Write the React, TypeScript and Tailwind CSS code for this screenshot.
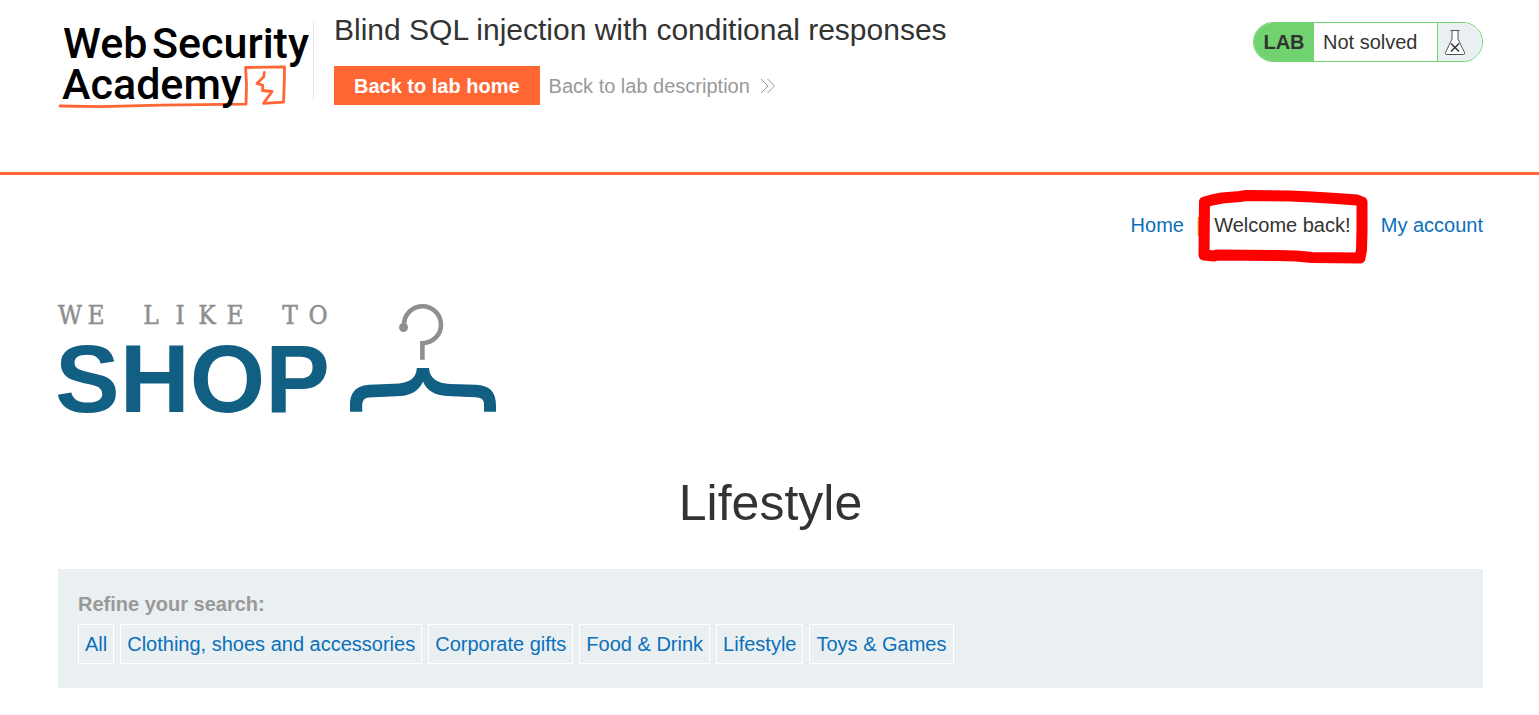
const categories = [
  'All',
  'Clothing, shoes and accessories',
  'Corporate gifts',
  'Food & Drink',
  'Lifestyle',
  'Toys & Games',
];

function AcademyLogo() {
  return (
    <svg className="overflow-visible" width="250" height="90" viewBox="58 20 250 90" role="img" aria-label="Web Security Academy">
      <g fill="none" stroke="#ff6633" strokeLinejoin="round" strokeLinecap="round">
        <path d="M60 106 L100 106.600 L160 105.200 L246 104.200 L246.500 85 L245.600 67.500 L284.500 66.800 L284.300 82 L283.500 102.200 L263.500 103.300 L272 91.500 L262.500 90.500 L262.800 85.300 L257 83.500 L263.700 76.700 L264.300 72.500" strokeWidth="2.800" />
      </g>
      <g fill="#000" fontFamily="Roboto, sans-serif" fontSize="43" fontWeight="500">
        <text x="63" y="58">Web</text>
        <text x="152" y="58">Security</text>
        <text x="62" y="99">Academy</text>
      </g>
    </svg>
  );
}

function FlaskIcon() {
  return (
    <svg width="22" height="28" viewBox="0 0 22 28" fill="none" aria-hidden="true">
      <path d="M8 2.500V11L1.500 24.500q-.5 2 1 2h17q1.500 0 1-2L14 11V2.500z" fill="#fff" stroke="#555" strokeWidth="1" />
      <path d="M6.500 2.500h9" stroke="#555" strokeWidth="1.200" />
      <path d="M7 15.500l8 8M15 15.500l-8 8" stroke="#333" strokeWidth="1.500" />
    </svg>
  );
}

function ShopLogo() {
  return (
    <svg className="overflow-visible" width="440" height="120" viewBox="58 298 440 120" role="img" aria-label="We like to shop">
      <text
        x="70 96 124 151 180 207 235 262 290 318"
        y="324"
        textAnchor="middle"
        fill="#8e8f90"
        stroke="#8e8f90"
        strokeWidth="0.500"
        fontFamily="'DejaVu Serif Condensed', 'DejaVu Serif', serif"
        fontSize="26"
      >
        WE LIKE TO
      </text>
      <text x="55" y="412" fill="#115f83" fontFamily="'Liberation Sans', sans-serif" fontWeight="700" fontSize="97">
        SHOP
      </text>
      <circle cx="403.500" cy="327.500" r="4.500" fill="#8e8f90" />
      <path d="M404 325.500 A18.500 18.500 0 1 1 422.400 343.200 V359.700" fill="none" stroke="#8e8f90" strokeWidth="4.600" />
      <path
        d="M350 411.800 V405 C350 391 358 385.500 369 384.800 L394 383.800 C408 383.500 416.500 379 416.800 368 H429 C429.500 378 437 383.500 450 384 L476 384.800 C490 385.500 496 392 496 406 V411.800 H484 V404 C484 399.500 481 397.500 475 397.200 L447 396 C435 395.500 426 390 423 381.500 C420 389 413 395 401 396 L369 397.600 C364 398.200 362.200 401 362.200 406 V411.800 Z"
        fill="#115f83"
      />
    </svg>
  );
}

function HandDrawnBox() {
  return (
    <svg className="pointer-events-none absolute -top-6 -left-[17px]" width="172" height="76" viewBox="1197 189 172 76" fill="none" aria-hidden="true">
      <path
        d="M1204 255 L1204.500 202 L1212 200 L1222 198 L1240 196.500 L1246 195.500 L1290 196 L1312 197 L1336 198.500 L1357 200 L1362 202 L1362 230 L1361.500 250 L1360 258 L1312 257.500 L1296 256 L1278 255.500 L1217 255 L1214 256 Z"
        stroke="#ff0000"
        strokeWidth="11"
        strokeLinejoin="round"
      />
    </svg>
  );
}

export default function App() {
  return (
    <div className="min-h-screen bg-white font-['Liberation_Sans',Arial,sans-serif] text-[20px] leading-6 text-[#333332]">
      <header className="flex items-start border-b-3 border-[#ff6633] pt-5 pr-14 pb-[62px] pl-[58px]">
        <a href="#academy" className="shrink-0">
          <AcademyLogo />
        </a>
        <div className="mt-0.5 ml-[5px] h-[78px] w-px shrink-0 bg-[#e6e6e6]" />
        <div className="-mt-2 ml-5 grow">
          <h2 className="text-[30px] leading-9">Blind SQL injection with conditional responses</h2>
          <div className="mt-[18px] flex items-center">
            <a href="#lab-home" className="bg-[#ff6633] px-5 pt-2 pb-[7px] font-bold text-white">
              Back to lab home
            </a>
            <a href="#description" className="ml-[9px] flex items-center gap-2.5 text-[#999999]">
              Back to lab description
              <svg width="16" height="16" viewBox="0 0 16 16" fill="none" stroke="currentColor" strokeWidth="1" aria-hidden="true">
                <path d="M1 1l7 7-7 7M7.500 1l7 7-7 7" />
              </svg>
            </a>
          </div>
        </div>
        <div className="mt-0.5 flex h-10 shrink-0 overflow-hidden rounded-full border border-[#70d36f]">
          <strong className="flex w-15 items-center justify-center bg-[#70d36f]">LAB</strong>
          <span className="flex w-[123px] items-center pl-[9px]">Not solved</span>
          <span className="flex w-[45px] items-center border-l border-[#70d36f] bg-[#eaeff2] pl-1.5">
            <FlaskIcon />
          </span>
        </div>
      </header>

      <main className="pr-14 pl-[58px]">
        <nav className="mt-[38px] flex justify-end">
          <a href="#home" className="text-[#0b6fba]">Home</a>
          <span className="mr-[13px] ml-3 text-[#c8963c]">|</span>
          <div className="relative">
            <p>Welcome back!</p>
            <HandDrawnBox />
          </div>
          <span className="mr-3 ml-[13px] text-[#c8963c]">|</span>
          <a href="#account" className="text-[#0b6fba]">My account</a>
        </nav>

        <div className="mt-[61px]">
          <ShopLogo />
        </div>

        <h1 className="mt-[55px] text-center text-[50px] leading-[60px]">Lifestyle</h1>

        <section className="mt-9 bg-[#eaeff2] px-5 pt-[23px] pb-6">
          <strong className="block text-[#999999]">Refine your search:</strong>
          <div className="mt-2 flex flex-wrap gap-1.5">
            {categories.map((name) => (
              <a key={name} href="#filter" className="border border-white px-1.5 py-[7px] text-[#0b6fba]">
                {name}
              </a>
            ))}
          </div>
        </section>
      </main>
    </div>
  );
}
